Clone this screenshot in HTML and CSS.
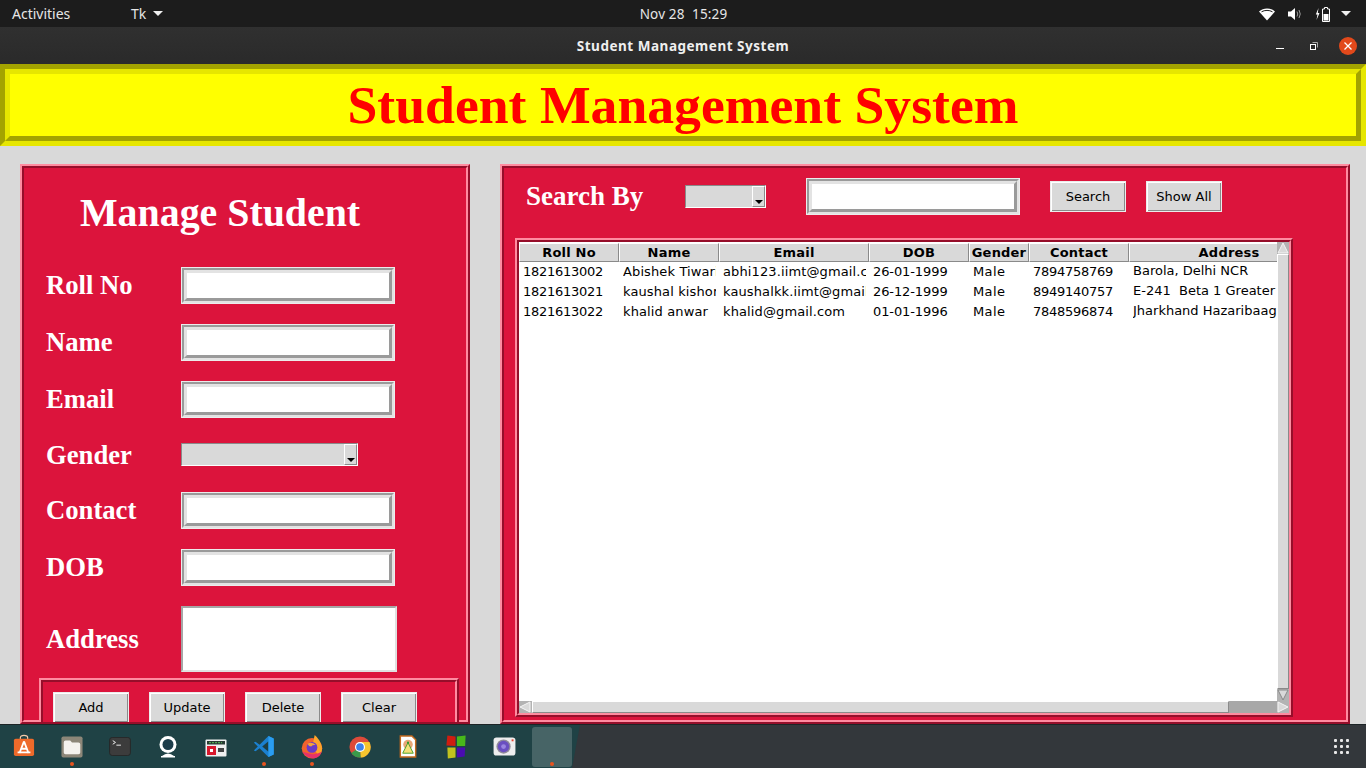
FILE: index.html
```html
<!DOCTYPE html>
<html lang="en">
<head>
<meta charset="utf-8">
<title>Student Management System</title>
<link rel="stylesheet" href="styles.css">
</head>
<body>
<div class="screen">
  <header class="topbar">
    <div class="top-left"><span class="activities">Activities</span><span class="tk">Tk</span><span class="caret"></span></div>
    <div class="clock">Nov 28&nbsp;&nbsp;15:29</div>
    <div class="top-right">
      <svg class="tray" width="18" height="14" viewBox="0 0 18 14"><path d="M1 4.500C5.500 .5 12.500 .5 17 4.500L9 13.500Z" fill="#fff"/><path d="M3.500 4.800C6.800 2.900 11.200 2.900 14.500 4.800" stroke="#1c1c1c" stroke-width="1" fill="none"/></svg>
      <svg class="tray vol" width="16" height="14" viewBox="0 0 16 14"><path d="M1 4.500H4L8 1V13L4 9.500H1Z" fill="#fff"/><path d="M10 4.500Q11.500 7 10 9.500M12 3Q14.500 7 12 11" stroke="#9a9a9a" stroke-width="1" fill="none"/></svg>
      <svg class="tray bat" width="16" height="16" viewBox="0 0 16 16"><path d="M3.500 2 0.800 8.500H2.500L1.500 14 4.500 7H2.800Z" fill="#fff"/><path d="M9.500 1.500H12.500V3H14.500V15.500H7.500V3H9.500Z" fill="none" stroke="#fff"/><rect x="8.500" y="8" width="5" height="6.500" fill="#fff"/></svg>
      <span class="caret"></span>
    </div>
  </header>

  <div class="titlebar">
    <div></div>
    <div class="wintitle">Student Management System</div>
    <div class="winctl">
      <svg class="ctl" width="10" height="10" viewBox="0 0 10 10"><rect x="1" y="7" width="8" height="1" fill="#fff"/></svg>
      <svg class="ctl" width="10" height="10" viewBox="0 0 10 10"><rect x="1.500" y="3.500" width="5" height="5" fill="none" stroke="#fff"/><path d="M3.500 1.500H8.500V6.500" fill="none" stroke="#aaa"/></svg>
      <span class="close"><svg width="18" height="18" viewBox="0 0 18 18"><path d="M5.500 5.500 12.500 12.500M12.500 5.500 5.500 12.500" stroke="#fff" stroke-width="1.300"/></svg></span>
    </div>
  </div>

  <div class="banner"><div class="banner-in"><h1 class="app-title">Student Management System</h1></div></div>

  <main class="workspace">
    <section class="ridge panel-left"><div class="ridge-in">
      <h2 class="manage">Manage Student</h2>
      <div class="form">
        <div class="row"><label class="lbl">Roll No</label><div class="entry"><div class="entry-mid"><input class="entry-in" type="text"></div></div></div>
        <div class="row"><label class="lbl">Name</label><div class="entry"><div class="entry-mid"><input class="entry-in" type="text"></div></div></div>
        <div class="row"><label class="lbl">Email</label><div class="entry"><div class="entry-mid"><input class="entry-in" type="text"></div></div></div>
        <div class="row row-gender"><label class="lbl">Gender</label><div class="combo combo-gender"><span class="combo-btn"><span class="combo-arrow"></span></span></div></div>
        <div class="row"><label class="lbl">Contact</label><div class="entry"><div class="entry-mid"><input class="entry-in" type="text"></div></div></div>
        <div class="row"><label class="lbl">DOB</label><div class="entry"><div class="entry-mid"><input class="entry-in" type="text"></div></div></div>
        <div class="row"><label class="lbl">Address</label><textarea class="address"></textarea></div>
      </div>
      <div class="ridge btn-frame"><div class="ridge-in btn-row">
        <button class="btn">Add</button><button class="btn">Update</button><button class="btn">Delete</button><button class="btn">Clear</button>
      </div></div>
    </div></section>

    <section class="ridge panel-right"><div class="ridge-in">
      <div class="searchbar">
        <span class="search-lbl">Search By</span>
        <div class="combo combo-search"><span class="combo-btn"><span class="combo-arrow"></span></span></div>
        <div class="entry"><div class="entry-mid"><input class="entry-in" type="text"></div></div>
        <button class="btn btn-search">Search</button>
        <button class="btn">Show All</button>
      </div>
      <div class="ridge table-frame"><div class="ridge-in table-in">
        <div class="tree-area">
          <div class="tree">
            <div class="thead">
              <div class="th">Roll No</div><div class="th">Name</div><div class="th">Email</div><div class="th">DOB</div><div class="th">Gender</div><div class="th">Contact</div><div class="th">Address</div>
            </div>
            <div class="tr">
              <div class="td num"><span>1821613002</span></div><div class="td"><span>Abishek Tiwari</span></div><div class="td"><span>abhi123.iimt@gmail.com</span></div><div class="td date"><span>26-01-1999</span></div><div class="td sex"><span>Male</span></div><div class="td num"><span>7894758769</span></div><div class="td td-addr"><span>Barola, Delhi NCR</span></div>
            </div>
            <div class="tr">
              <div class="td num"><span>1821613021</span></div><div class="td"><span>kaushal kishore</span></div><div class="td"><span>kaushalkk.iimt@gmail.com</span></div><div class="td date"><span>26-12-1999</span></div><div class="td sex"><span>Male</span></div><div class="td num"><span>8949140757</span></div><div class="td td-addr"><span>E-241&nbsp; Beta 1 Greater Noida</span></div>
            </div>
            <div class="tr">
              <div class="td num"><span>1821613022</span></div><div class="td"><span>khalid anwar</span></div><div class="td"><span>khalid@gmail.com</span></div><div class="td date"><span>01-01-1996</span></div><div class="td sex"><span>Male</span></div><div class="td num"><span>7848596874</span></div><div class="td td-addr"><span>Jharkhand Hazaribaag</span></div>
            </div>
          </div>
          <div class="vscroll">
            <svg class="arrow" width="12" height="12" viewBox="0 0 12 12"><path d="M6 1 11 11H1Z" fill="#d9d9d9" stroke="#f4f4f4"/></svg>
            <div class="vthumb"></div>
            <svg class="arrow" width="12" height="12" viewBox="0 0 12 12"><path d="M1 1H11L6 11Z" fill="#d9d9d9" stroke="#8a8a8a"/></svg>
          </div>
        </div>
        <div class="hscroll">
          <svg class="arrow" width="12" height="12" viewBox="0 0 12 12"><path d="M11 1V11L1 6Z" fill="#d9d9d9" stroke="#f4f4f4"/></svg>
          <div class="hthumb"></div>
          <div class="htrough"></div>
          <svg class="arrow" width="12" height="12" viewBox="0 0 12 12"><path d="M1 1V11L11 6Z" fill="#d9d9d9" stroke="#f4f4f4"/></svg>
        </div>
      </div></div>
    </div></section>
  </main>

  <footer class="dock">
    <div class="dock-apps">
      <div class="app up"><svg width="22" height="23" viewBox="0 0 24 25"><path d="M8 6V4Q8 1.500 12 1.500T16 4V6" fill="none" stroke="#f3c9a8" stroke-width="1.300"/><rect x="1" y="5" width="22" height="19" rx="2" fill="#ee6a2a"/><path d="M12 8 7 21M12 8 17 21M8.500 16H15.500M5 20H19" stroke="#fff" stroke-width="2" fill="none"/></svg></div>
      <div class="app"><svg width="22" height="22" viewBox="0 0 24 24"><rect x="0.500" y="0.500" width="23" height="23" rx="2" fill="#8c8678"/><path d="M3 7Q3 5 5 5H10L12 7H19Q21 7 21 9V18Q21 20 19 20H5Q3 20 3 18Z" fill="#f4f2ee"/></svg><i class="dot"></i></div>
      <div class="app"><svg width="22" height="19" viewBox="0 0 24 21"><rect x="0.500" y="0.500" width="23" height="20" rx="3" fill="#3c3c3c" stroke="#262626"/><path d="M4 4 7 6 4 8" fill="none" stroke="#fff"/><path d="M8 9H13" stroke="#fff"/></svg></div>
      <div class="app"><svg width="22" height="22" viewBox="0 0 22 22"><circle cx="11" cy="8.500" r="8.500" fill="#fff"/><circle cx="11" cy="8.500" r="5.500" fill="#1d3d4a"/><path d="M5 20Q11 15 17 20Z" fill="#fff"/><rect x="4" y="20" width="14" height="1.500" fill="#fff"/></svg></div>
      <div class="app down"><svg width="22" height="18" viewBox="0 0 22 18"><rect x="0.500" y="0.500" width="21" height="17" rx="1" fill="#f0f0f0"/><rect x="2" y="2" width="18" height="3.500" fill="#2a3a34"/><path d="M4 3.700H17" stroke="#58c058" stroke-dasharray="2 1"/><rect x="2" y="7" width="9" height="9" fill="#d8182c"/><rect x="5" y="10" width="3" height="3" fill="#fff"/><rect x="13" y="9" width="6" height="4" fill="#444"/></svg></div>
      <div class="app"><svg width="22" height="23" viewBox="0 0 24 26"><path d="M17 1 23 4V22L17 25 7 15 2.500 18.500 0.500 17.500 5 13 0.500 8.500 2.500 7.500 7 11Z" fill="#1b80cf"/><path d="M17 7V19L10 13Z" fill="#1d3f42"/><path d="M17 1 23 4V22L17 25Z" fill="#2a9df0"/></svg><i class="dot"></i></div>
      <div class="app"><svg width="22" height="25" viewBox="0 0 24 28"><circle cx="12" cy="16" r="11.500" fill="#f2622e"/><path d="M15 1Q21 6 23 14Q24 20 20 24L12 16Z" fill="#ffa52a"/><path d="M1 20Q6 27 14 27.500Q20 27 23 20Q16 24 10 22Z" fill="#e8316a"/><circle cx="12" cy="15" r="6" fill="#6a3bc8"/><path d="M7 11Q11 8 16 12Q12 12 11 14Q8 14 7 11Z" fill="#f4a43a"/></svg><i class="dot"></i></div>
      <div class="app"><svg width="22" height="22" viewBox="0 0 24 24"><circle cx="12" cy="12" r="11.500" fill="#de4a3a"/><path d="M12 12 2.500 18.500A11.500 11.500 0 0 0 13 23.500Z" fill="#3a9a4a"/><path d="M12 6.500H22.300A11.500 11.500 0 0 1 13 23.500L12 12Z" fill="#f7c52e"/><circle cx="12" cy="12" r="5.500" fill="#fff"/><circle cx="12" cy="12" r="4.200" fill="#3f82ea"/></svg></div>
      <div class="app"><svg width="18" height="23" viewBox="0 0 18 24"><path d="M1 1H13L17 5V23H1Z" fill="#fff" stroke="#c46a1e" stroke-width="1.500"/><circle cx="9" cy="10" r="5" fill="#e8a878"/><path d="M9 8 3.500 19H14.500Z" fill="#f4e078" stroke="#4aa02a"/><rect x="8" y="7" width="2" height="2" fill="#2a9a2a"/></svg></div>
      <div class="app"><svg width="22" height="25" viewBox="0 0 22 26"><path d="M2 1.500 10.500 2.500V12.500L1 12Z" fill="#cf1d10"/><path d="M12 2.500 21 1.500 20.500 12.500 12 12.500Z" fill="#48b81a"/><path d="M2 14 10.500 14V24.500L2.500 25.500Z" fill="#c2c21e"/><path d="M12 14H20.500L20 23.500 12 24.500Z" fill="#4a0cb0"/></svg></div>
      <div class="app"><svg width="23" height="19" viewBox="0 0 24 20"><rect x="0.500" y="0.500" width="23" height="19" rx="3" fill="#eeeeee"/><circle cx="11" cy="10" r="7.500" fill="#8f8a9a"/><circle cx="11" cy="10" r="6" fill="#6a4fc0"/><circle cx="11" cy="10" r="2.500" fill="#9a86e0"/><rect x="19.500" y="2.500" width="2" height="2" fill="#e8432e"/></svg></div>
      <div class="app"><span class="tile"></span><i class="dot"></i></div>
    </div>
    <div class="dock-rest">
      <svg width="16" height="16" viewBox="0 0 16 16" fill="#e8e8e8"><rect x="0" y="0" width="3" height="3" rx="1"/><rect x="6" y="0" width="3" height="3" rx="1"/><rect x="12" y="0" width="3" height="3" rx="1"/><rect x="0" y="6" width="3" height="3" rx="1"/><rect x="6" y="6" width="3" height="3" rx="1"/><rect x="12" y="6" width="3" height="3" rx="1"/><rect x="0" y="12" width="3" height="3" rx="1"/><rect x="6" y="12" width="3" height="3" rx="1"/><rect x="12" y="12" width="3" height="3" rx="1"/></svg>
    </div>
  </footer>
</div>
</body>
</html>
```

FILE: styles.css
```css
* { box-sizing: border-box; }
html, body { margin: 0; padding: 0; }
body { background: #d9d9d9; overflow: hidden; }
.screen { width: 1366px; height: 768px; display: flex; flex-direction: column; overflow: hidden; }

/* GNOME top bar */
.topbar { height: 27px; flex: none; background: #1c1c1c; display: grid; grid-template-columns: 1fr auto 1fr; align-items: center; color: #e6e6e6; font: 14px "Noto Sans", sans-serif; padding: 0 15px 0 12px; }
.top-left { display: flex; align-items: center; }
.activities { width: 119px; }
.tk { margin-right: 7px; }
.caret { display: inline-block; width: 0; height: 0; border-left: 5px solid transparent; border-right: 5px solid transparent; border-top: 5px solid #f0f0f0; }
.clock { font-size: 13.500px; letter-spacing: .17px; margin-left: 4px; }
.top-right { display: flex; justify-content: flex-end; align-items: center; }
.tray { margin-right: 11px; }
.vol { margin-right: 12px; }
.bat { margin-right: 10px; }

/* window title bar */
.titlebar { height: 37px; flex: none; background: linear-gradient(#303030, #2a2a2a); display: grid; grid-template-columns: 1fr auto 1fr; align-items: center; color: #efefef; }
.wintitle { font: bold 13.500px "Noto Sans", sans-serif; letter-spacing: .52px; }
.winctl { display: flex; justify-content: flex-end; align-items: center; padding-right: 9px; }
.ctl { margin-right: 24px; }
.ctl + .ctl { margin-right: 20px; }
.close { width: 18px; height: 18px; border-radius: 50%; background: #e2491b; display: flex; }

/* banner */
.banner { height: 82px; flex: none; border: 5px solid; border-color: #a3a300 #e6e600 #e6e600 #a3a300; }
.banner-in { height: 100%; background: #ff0; border: 5px solid; border-color: #e6e600 #a3a300 #a3a300 #e6e600; display: flex; align-items: center; justify-content: center; }
.app-title { margin: 2px 0 0; color: #f00; font: bold 53.700px "Liberation Serif", serif; line-height: 1; }

/* workspace */
.workspace { flex: 1; min-height: 0; display: flex; align-items: flex-start; padding: 18px 0 0 20px; gap: 30px; overflow: hidden; }
.ridge { border: 2px solid; border-color: #ff8ba0 #960e2a #960e2a #ff8ba0; background: #dc143c; }
.ridge-in { border: 2px solid; border-color: #960e2a #ff8ba0 #ff8ba0 #960e2a; height: 100%; }
.panel-left { width: 450px; height: 560px; flex: none; overflow: hidden; }
.panel-right { width: 850px; height: 560px; flex: none; }

.manage { margin: 0; height: 99px; padding: 20px 0 0 56px; color: #fff; font: bold 39.860px/50px "Liberation Serif", serif; }
.form { display: flex; flex-direction: column; gap: 20px; padding-left: 22px; }
.row { display: flex; align-items: center; }
.row-gender { height: 33px; margin-bottom: 1px; }
.row-gender .lbl { padding-top: 2px; }
.lbl { width: 135px; flex: none; color: #fff; font: bold 26.670px "Liberation Serif", serif; }

.entry { width: 214px; height: 37px; flex: none; border: 1px solid #ececec; }
.entry-mid { height: 100%; border: 2px solid; border-color: #9a9a9a #e3e3e3 #e3e3e3 #9a9a9a; }
.entry-in { display: block; width: 100%; height: 100%; margin: 0; padding: 0; background: #fff; border: 3px solid; border-color: #e3e3e3 #9a9a9a #9a9a9a #e3e3e3; border-radius: 0; outline: none; }

.combo { height: 23px; flex: none; background: #d9d9d9; border: 1px solid; border-color: #8a8a8a #fff #fff #8a8a8a; display: flex; justify-content: flex-end; }
.combo-gender { width: 177px; }
.combo-search { width: 81px; }
.combo-btn { width: 13px; height: 100%; border: 1px solid; border-color: #fff #8a8a8a #8a8a8a #fff; display: flex; align-items: flex-end; justify-content: center; padding-bottom: 2px; }
.combo-arrow { width: 0; height: 0; border-left: 4px solid transparent; border-right: 4px solid transparent; border-top: 4px solid #000; }

.address { display: block; width: 216px; height: 66px; flex: none; margin: 0; padding: 0; background: #fff; border: 2px solid; border-color: #a6a6a6 #e0e0e0 #e0e0e0 #a6a6a6; border-radius: 0; resize: none; outline: none; }

.btn-frame { width: 420px; height: 80px; margin: 6px 0 0 15px; }
.btn-row { display: flex; gap: 20px; padding: 10px; }
.btn { width: 76px; height: 31px; flex: none; margin: 0; padding: 0; color: #000; background: #d9d9d9; border: 1px solid #ececec; box-shadow: inset 1px 1px #fff, inset -1px -1px #8a8a8a; border-radius: 0; font: 13px "DejaVu Sans", sans-serif; }

/* search */
.searchbar { height: 57px; display: flex; align-items: center; padding-left: 22px; }
.search-lbl { width: 159px; flex: none; color: #fff; font: bold 27px "Liberation Serif", serif; }
.combo-search + .entry { margin-left: 40px; }
.btn-search { margin: 0 20px 0 30px; }

/* table */
.table-frame { width: 778px; height: 479px; margin: 13px 0 0 11px; }
.table-in { display: flex; flex-direction: column; background: #fff; }
.tree-area { flex: 1; min-height: 0; display: flex; }
.tree { flex: 1; min-width: 0; overflow: hidden; padding-top: 1px; font: 13px "DejaVu Sans", sans-serif; color: #000; background: #fff; }
.thead, .tr { display: grid; grid-template-columns: 100px 100px 150px 100px 60px 100px 200px; width: 810px; }
.thead { height: 19px; }
.th { background: #d9d9d9; font-weight: bold; text-align: center; line-height: 17px; letter-spacing: .2px; border: 1px solid; border-color: #fff #8a8a8a #8a8a8a #fff; white-space: nowrap; overflow: hidden; }
.tr { height: 20px; }
.td { padding: 0 3px 0 4px; line-height: 20px; letter-spacing: .12px; }
.td span { display: block; overflow: hidden; white-space: nowrap; }
.td-addr { line-height: 18px; letter-spacing: 0; }
.num { letter-spacing: -.27px; }
.date { letter-spacing: -.1px; }
.sex { letter-spacing: .4px; }
.vscroll { width: 12px; flex: none; display: flex; flex-direction: column; background: #d9d9d9; }
.arrow { display: block; flex: none; background: #b3b3b3; }
.vthumb { flex: 1; background: #d9d9d9; border: 1px solid; border-color: #fff #8a8a8a #8a8a8a #fff; }
.hscroll { height: 12px; flex: none; display: flex; background: #b3b3b3; }
.hthumb { width: 697px; margin-left: 1px; flex: none; background: #d9d9d9; border: 1px solid; border-color: #fff #8a8a8a #8a8a8a #fff; }
.htrough { flex: 1; background: #a8a8a8; }

/* dock */
.dock { height: 44px; flex: none; display: flex; background: #33373b; border-top: 1px solid #1c2426; }
.dock-apps { width: 580px; flex: none; display: flex; background: #1f4245; clip-path: polygon(0 0, 100% 0, 572px 100%, 0 100%); }
.dock-rest { flex: 1; display: flex; justify-content: flex-end; align-items: center; padding: 0 16px 0 0; }
.app { width: 48px; height: 100%; flex: none; display: flex; align-items: center; justify-content: center; position: relative; }
.app.up svg { margin-bottom: 3px; }
.app.down svg { margin-top: 2px; }
.tile { width: 40px; height: 40px; border-radius: 3px; background: rgba(255,255,255,.18); }
.dot { position: absolute; left: 22px; bottom: 2px; width: 4px; height: 4px; border-radius: 50%; background: #e9541f; }
```
